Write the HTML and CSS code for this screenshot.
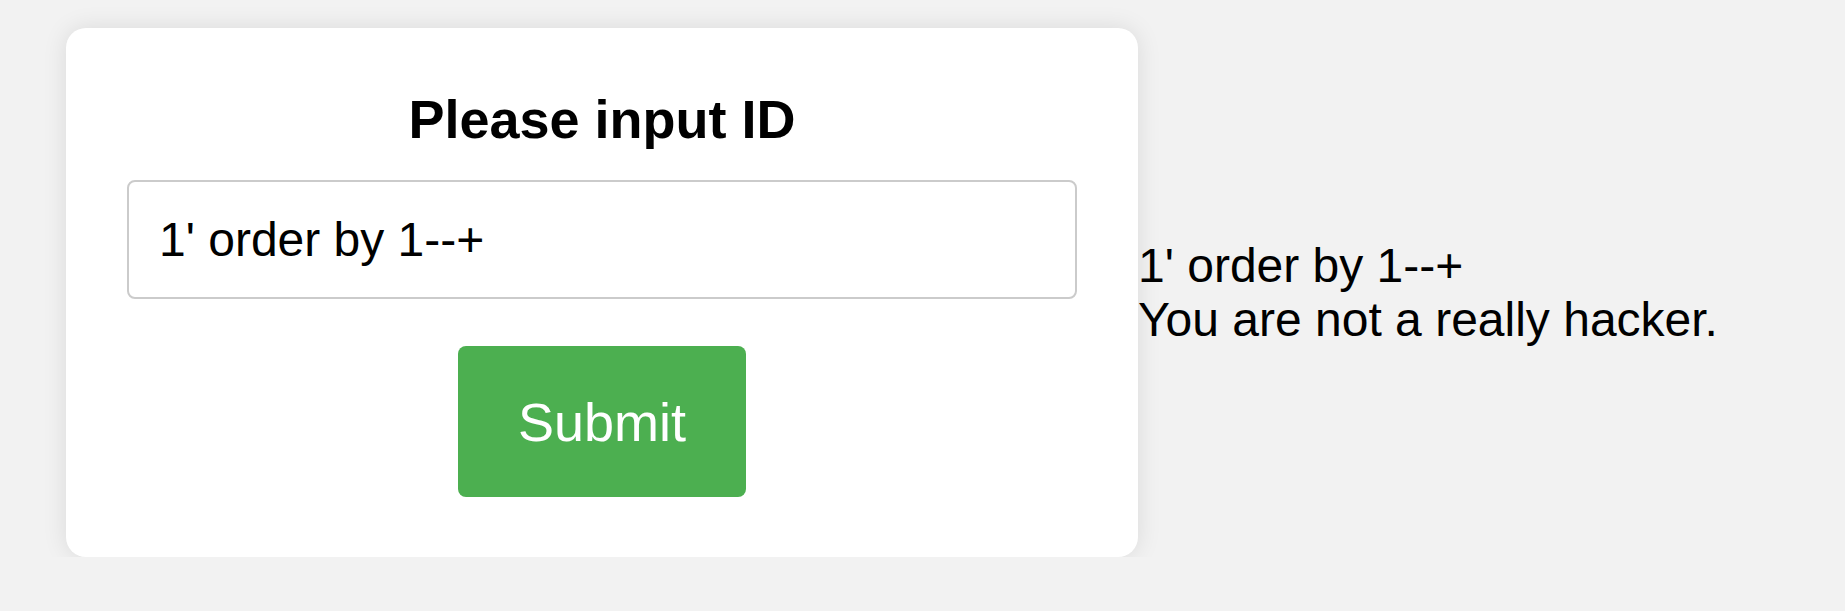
FILE: index.html
```html
<!DOCTYPE html>
<html lang="en">
<head>
<meta charset="utf-8">
<title>Please input ID</title>
<link rel="stylesheet" href="styles.css">
</head>
<body>
  <div class="card">
    <h2 class="title">Please input ID</h2>
    <form class="form">
      <input class="field" type="text" value="1' order by 1--+">
      <button class="submit" type="button">Submit</button>
    </form>
  </div>
  <div class="result">1' order by 1--+<br>You are not a really hacker.</div>
</body>
</html>
```

FILE: styles.css
```css
html, body {
  background: #f2f2f2;
}
body {
  margin: 0;
  padding: 28px 0 0 66px;
  display: flex;
  align-items: center;
  font-family: "Liberation Sans", Arial, sans-serif;
  color: #000;
}
.card {
  box-sizing: border-box;
  width: 1072px;
  padding: 60px 61px;
  background: #fff;
  border-radius: 20px;
  box-shadow: 0 0 24px rgba(0, 0, 0, 0.1);
  text-align: center;
}
.title {
  margin: 0 0 30px;
  font-size: 54px;
  font-weight: bold;
  line-height: normal;
}
.form {
  display: flex;
  flex-direction: column;
  align-items: center;
  margin: 0;
}
.field {
  box-sizing: border-box;
  width: 100%;
  height: 119px;
  padding: 0 30px;
  border: 2px solid #cbcbcb;
  border-radius: 8px;
  font-family: "Liberation Sans", Arial, sans-serif;
  font-size: 48px;
  color: #000;
  background: #fff;
  outline: none;
}
.submit {
  margin-top: 47px;
  width: 288px;
  height: 151px;
  padding: 0;
  border: none;
  border-radius: 8px;
  background: #4caf50;
  color: #fff;
  font-family: "Liberation Sans", Arial, sans-serif;
  font-size: 54px;
  line-height: normal;
  cursor: pointer;
}
.result {
  font-size: 48px;
  line-height: 54px;
}
```
